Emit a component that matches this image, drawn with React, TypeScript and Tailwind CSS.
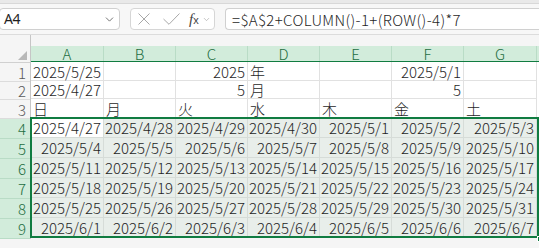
import { ChevronDown } from 'lucide-react';

const cols = ['A', 'B', 'C', 'D', 'E', 'F', 'G'];
const colW = ['w-[73px]', 'w-[72px]', 'w-[72px]', 'w-[72px]', 'w-[72px]', 'w-[72px]', 'w-[73px]'];

type Cell = { v: string; align?: 'l' | 'r' };

const topRows: Cell[][] = [
  [{ v: '2025/5/25', align: 'r' }, { v: '' }, { v: '2025', align: 'r' }, { v: '年' }, { v: '' }, { v: '2025/5/1', align: 'r' }, { v: '' }],
  [{ v: '2025/4/27', align: 'r' }, { v: '' }, { v: '5', align: 'r' }, { v: '月' }, { v: '' }, { v: '5', align: 'r' }, { v: '' }],
  ['日', '月', '火', '水', '木', '金', '土'].map((d) => ({ v: d })),
];

const rowH = ['h-[19px]', 'h-[18px]', 'h-[19px]'];

// 2025/4/27 から 7日ずつ
function calendar() {
  const start = new Date(2025, 3, 27);
  const rows: string[][] = [];
  for (let r = 0; r < 6; r++) {
    const row: string[] = [];
    for (let c = 0; c < 7; c++) {
      const d = new Date(start);
      d.setDate(start.getDate() + r * 7 + c);
      row.push(`${d.getFullYear()}/${d.getMonth() + 1}/${d.getDate()}`);
    }
    rows.push(row);
  }
  return rows;
}

const font = 'font-["Noto_Sans_CJK_JP",sans-serif] font-light';

export default function App() {
  const dates = calendar();

  return (
    <div className={`w-[539px] h-[248px] overflow-hidden bg-[#f5f5f5] text-[#1f1f1f] ${font}`}>
      {/* ribbon edge */}
      <div className="h-[4px] bg-[#e9e9e9] border-b border-[#d8d8d8]" />

      {/* formula bar */}
      <div className="flex items-center h-[31px] pt-[4px] pb-[4px] gap-[10px] border-b border-[#dcdcdc] bg-[#f7f7f7]">
        <div className="-ml-px w-[121px] h-[22px] bg-white border border-[#d0d0d0] rounded-[4px] flex items-center justify-between pl-[4px] pr-[3px]">
          <span className="text-[14px] leading-none font-['Noto_Sans',sans-serif] font-normal tracking-[-0.5px]">A4</span>
          <ChevronDown size={13} strokeWidth={1.5} className="text-[#555]" />
        </div>
        <div className="w-[85px] h-[22px] bg-white border border-[#d6d6d6] rounded-[4px] flex items-center pl-[7px]">
          <svg width="12" height="12" viewBox="0 0 12 12" className="shrink-0">
            <path d="M0.5 0.5 L11.5 11.5 M11.5 0.5 L0.5 11.5" stroke="#a8a8a8" strokeWidth="1" fill="none" />
          </svg>
          <svg width="17" height="12" viewBox="0 0 17 12" className="shrink-0 ml-[13px]">
            <path d="M0.5 6 L6 11.3 L16.5 0.5" stroke="#a8a8a8" strokeWidth="1" fill="none" />
          </svg>
          <span className="flex items-center gap-[3px] ml-[9px]">
            <span className="font-['Liberation_Serif',serif] italic text-[15px] text-[#444] leading-none">
              f<span className="text-[11px] not-italic font-['Liberation_Sans',sans-serif]">x</span>
            </span>
            <ChevronDown size={9} strokeWidth={1.5} className="text-[#999]" />
          </span>
        </div>
        <div className="flex-1 h-[22px] bg-white border border-[#d0d0d0] rounded-l-[4px] border-r-0 flex items-center pl-[6px] text-[15px] leading-none tracking-[0.35px]">
          =$A$2+COLUMN()-1+(ROW()-4)*7
        </div>
      </div>

      {/* grid */}
      <div className="flex">
        {/* row headers */}
        <div className="w-[31px] shrink-0 border-r border-[#c6c6c6]">
          <div className="h-[28px] flex items-end justify-end pr-[3px] pb-[2px] border-b border-[#d0d0d0]">
            <svg width="9" height="9" viewBox="0 0 9 9">
              <polygon points="9,0 9,9 0,9" fill="#b8b8b8" />
            </svg>
          </div>
          {[1, 2, 3].map((n, i) => (
            <div
              key={n}
              className={`${rowH[i]} flex items-center justify-end pr-[4px] text-[15px] leading-none text-[#5a5a5a] border-b border-[#dcdcdc]`}
            >
              {n}
            </div>
          ))}
          {[4, 5, 6, 7, 8, 9].map((n) => (
            <div
              key={n}
              className="h-[20px] flex items-center justify-end pr-[4px] text-[15px] leading-none text-[#1e6e42] bg-[#d2ecdb] border-b border-[#b9dcc6]"
            >
              {n}
            </div>
          ))}
        </div>

        <div className="flex-1">
          {/* column headers */}
          <div className="h-[11px]" />
          <div className="flex h-[17px] bg-[#d2ecdb] border-b-2 border-[#107c41]">
            {cols.map((c, i) => (
              <div
                key={c}
                className={`${colW[i]} shrink-0 flex items-center justify-center text-[15px] leading-none text-[#1e6e42] border-r border-[#b9dcc6]`}
              >
                {c}
              </div>
            ))}
          </div>

          {/* rows 1-3 */}
          <div className="bg-white">
            {topRows.map((row, r) => (
              <div key={r} className={`flex ${rowH[r]} ${r === 0 ? 'mt-[-1px]' : ''}`}>
                {row.map((cell, c) => (
                  <div
                    key={c}
                    className={`${colW[c]} shrink-0 flex items-center px-[2px] text-[15px] leading-none whitespace-nowrap border-r border-b border-[#e1e1e1] ${
                      cell.align === 'r' ? 'justify-end' : 'justify-start'
                    }`}
                  >
                    {cell.v}
                  </div>
                ))}
              </div>
            ))}
          </div>

          {/* rows 4-9, selected */}
          <div className="relative bg-[#e8eeea]">
            {dates.map((row, r) => (
              <div key={r} className="flex h-[20px]">
                {row.map((v, c) => (
                  <div
                    key={c}
                    className={`${colW[c]} shrink-0 flex items-center justify-end px-[2px] text-[15px] leading-none whitespace-nowrap border-r border-b border-[#d6dcd8] ${
                      r === 0 && c === 0 ? 'bg-white' : ''
                    }`}
                  >
                    {v}
                  </div>
                ))}
              </div>
            ))}
            <div className="absolute inset-0 -left-[1px] -top-[1px] border-2 border-[#107c41] pointer-events-none" />
            <div className="absolute -bottom-[4px] right-[-4px] w-[6px] h-[6px] bg-[#107c41] border border-white" />
          </div>
        </div>
      </div>
    </div>
  );
}
